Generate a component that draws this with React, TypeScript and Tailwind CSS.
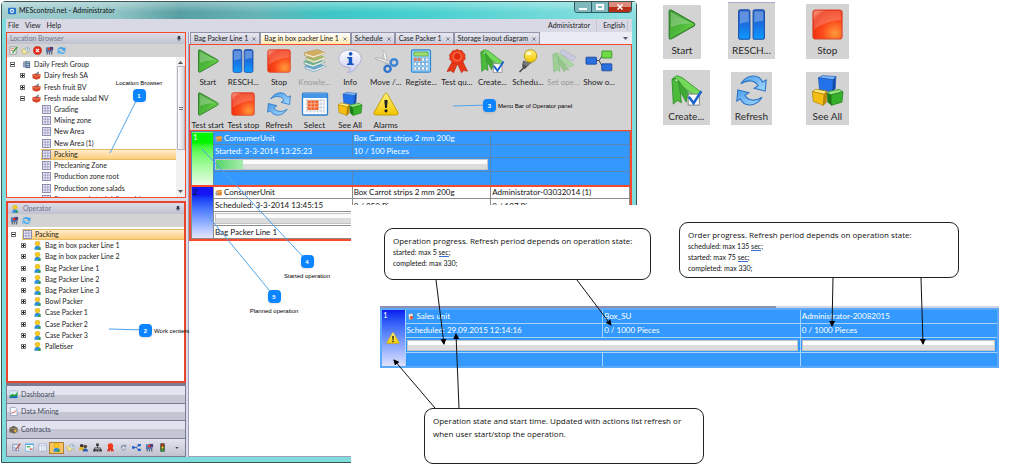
import type { ReactNode } from "react";
import { useState } from "react";

/* ---------- shared gradients ---------- */
function Gradients() {
  return (
    <svg width="0" height="0" className="absolute" aria-hidden="true">
      <defs>
        <linearGradient id="green" x1="0" y1="0" x2="1" y2="1">
          <stop offset="0" stopColor="#3f9e35" />
          <stop offset=".5" stopColor="#4cb83a" />
          <stop offset="1" stopColor="#7fe04a" />
        </linearGradient>
        <linearGradient id="blue" x1="0" y1="0" x2="0" y2="1">
          <stop offset="0" stopColor="#2a63c8" />
          <stop offset=".5" stopColor="#1a6fe0" />
          <stop offset="1" stopColor="#0d9bff" />
        </linearGradient>
        <radialGradient id="red" cx=".75" cy=".8" r=".95">
          <stop offset="0" stopColor="#ff9a3a" />
          <stop offset=".45" stopColor="#fb4a1c" />
          <stop offset=".85" stopColor="#ee2b0c" />
          <stop offset="1" stopColor="#f2694f" />
        </radialGradient>
        <linearGradient id="sky" x1="0" y1="0" x2="1" y2="1">
          <stop offset="0" stopColor="#4a9bea" />
          <stop offset="1" stopColor="#a5dbff" />
        </linearGradient>
        <linearGradient id="bubble" x1="0" y1="0" x2="0" y2="1">
          <stop offset="0" stopColor="#ffffff" />
          <stop offset="1" stopColor="#c9c9ee" />
        </linearGradient>
        <linearGradient id="yellow" x1="0" y1="0" x2="0" y2="1">
          <stop offset="0" stopColor="#fff27a" />
          <stop offset="1" stopColor="#f2c500" />
        </linearGradient>
        <marker id="tip" viewBox="0 0 6 6" refX="5" refY="3" markerWidth="6" markerHeight="6" markerUnits="userSpaceOnUse" orient="auto">
          <path d="M0 0 6 3 0 6z" fill="#000" />
        </marker>
      </defs>
    </svg>
  );
}

/* ---------- large icons, 24 x 24 grid ---------- */
const ICONS: Record<string, ReactNode> = {
  start: (
    <>
      <path d="M2.500 2Q2.500 .2 4.200 1L21.500 10.800Q23 12 21.500 13.200L4.200 23Q2.500 23.800 2.500 22z" fill="url(#green)" stroke="#2c7d28" strokeWidth=".9" />
      <path d="M3.800 2.300 20 11.500Q12 10.500 3.800 14z" fill="#fff" opacity=".25" />
    </>
  ),
  pause: (
    <>
      <rect x="2" y=".6" width="8.800" height="22.800" rx="1.600" fill="url(#blue)" stroke="#1c4fa8" strokeWidth=".8" />
      <rect x="13.200" y=".6" width="8.800" height="22.800" rx="1.600" fill="url(#blue)" stroke="#1c4fa8" strokeWidth=".8" />
      <path d="M3 2h6.800v8q-3.400 0-6.800 1.500zM14.200 2H21v7q-3.400 0-6.800 1.500z" fill="#fff" opacity=".28" />
    </>
  ),
  stop: (
    <>
      <rect x=".7" y=".7" width="22.600" height="22.600" rx="2" fill="url(#red)" stroke="#d9482c" strokeWidth=".8" />
      <path d="M1.600 2.600q0-1 1-1h18.800q1 0 1 1v6Q10 9.500 1.600 16z" fill="#fff" opacity=".2" />
    </>
  ),
  books: (
    <g strokeWidth=".5">
      <path d="M2 17l12-3 9 3.500L11 22.500 2 19.500z" fill="#4f9ccb" stroke="#3a7aa5" />
      <path d="M2.500 17.800 11 20.700 22 16.600v1.300L11 22.300 2.500 19.300z" fill="#e6eef2" />
      <path d="M1 12.500l12-3 9 3.500-12 5-9-3z" fill="#5aa888" stroke="#3f8a6c" />
      <path d="M1.500 13.300 10 16.200 21 12.100v1.300L10 17.800 1.500 14.800z" fill="#eaf2ea" />
      <path d="M3 8.500l12-3 8 3.500-12 5-8-3z" fill="#9ab556" stroke="#7c9540" />
      <path d="M3.500 9.300 11 12.200 22.500 8.100v1.300L11 13.800 3.500 10.800z" fill="#f1f1e0" />
      <path d="M1.500 3.500l13-3 8.500 3.500-12.500 5.500-9-3z" fill="#cfa545" stroke="#a98530" />
      <path d="M2 4.400 10.500 7.200 22.500 3v1.300L10.500 8.800 2 6z" fill="#f5efd8" />
    </g>
  ),
  info: (
    <>
      <path d="M12 1C5.500 1 .8 4.800.8 9.800c0 5 4.700 8.700 11 8.800.7 2.500-.6 4-2.300 4.800 5.500-.2 8.200-2.700 8.700-6.200 3-1.600 5-4.300 5-7.400C23.200 4.800 18.500 1 12 1z" fill="url(#bubble)" stroke="#a6a6cf" strokeWidth=".8" />
      <circle cx="12.600" cy="4.800" r="1.900" fill="#1557c0" />
      <path d="M9.200 8h5v6.400h1.600v1.500H9v-1.500h1.700V9.500H9.200z" fill="#1557c0" />
    </>
  ),
  scissors: (
    <>
      <path d="M8.500 1.200q3 1.500 3.600 5l1.500 8-2.200.8z" fill="#fafafa" stroke="#999" strokeWidth=".6" />
      <path d="M.8 9.500q2-1.500 5.500-.3l10 3.600-.8 2.200z" fill="#eee" stroke="#999" strokeWidth=".6" />
      <circle cx="20" cy="13.500" r="3.300" fill="none" stroke="#3f86d8" strokeWidth="2.400" />
      <circle cx="13.600" cy="19.800" r="3.100" fill="none" stroke="#2f74cc" strokeWidth="2.400" />
    </>
  ),
  calculator: (
    <>
      <rect x="2.500" y=".8" width="19" height="22.400" rx="1.500" fill="#9fd6fb" stroke="#3187cf" strokeWidth="1.200" />
      <rect x="5" y="3" width="14" height="4" fill="#9fdc6c" stroke="#4b9e44" strokeWidth=".7" />
      <g fill="#fff" stroke="#4d86bf" strokeWidth=".5">
        {[9, 13.5, 18].map((y) =>
          [5, 8.8, 12.6, 16.4].map((x) => <rect key={`${x}-${y}`} x={x} y={y} width="2.700" height="3" />),
        )}
      </g>
      <path d="M5 9h2.700v3H5zM8.800 9h2.700v3H8.800z" fill="#e77b55" />
    </>
  ),
  ribbon: (
    <>
      <path d="M7.500 12 2 22.500l4-.7 2.500 2 4-9 4 9 2.300-2.200 3.700.6L17 11z" fill="#e8381a" stroke="#b5240d" strokeWidth=".6" />
      <path d="M12.200.5l2.200 1 2.500.2 1.300 2 1.800 1.700-.3 2.400.5 2.300-1.800 1.600-1.100 2.200-2.500.4-2.200 1.100-2.300-1-2.400-.3-1.400-2-1.800-1.700.3-2.400-.4-2.400 1.700-1.600 1.200-2.100 2.400-.3z" fill="#f23c1c" stroke="#bb220b" strokeWidth=".7" />
      <circle cx="12.300" cy="7.500" r="4" fill="#e0290b" stroke="#ff8a66" strokeWidth=".9" />
    </>
  ),
  create: (
    <>
      <path d="M.8 3.200 4.500.5l4.300 1.700L23.500 13.500 20 17 7 8z" fill="#74d95a" stroke="#2f9a2b" strokeWidth=".7" />
      <path d="M.8 3.200 3.800 2.600 6.500 6.500 8 21.500 5 19.700 1.800 22.500z" fill="#4cbb3b" stroke="#2f8f2a" strokeWidth=".7" />
      <path d="M5.500 4 9 8.500l7 8.500-3.500.3-.7 3.700L7.200 13z" fill="#3fa832" stroke="#2f8f2a" strokeWidth=".6" />
      <circle cx="4.300" cy="4" r="1.100" fill="#e4f7df" stroke="#2f8f2a" strokeWidth=".6" />
      <rect x="13.300" y="14.800" width="8.700" height="8.500" fill="#fff" stroke="#8a8a8a" strokeWidth=".8" />
      <path d="M13.800 16.800l3.700 5 6-9.300" fill="none" stroke="#1d62cf" strokeWidth="2" />
    </>
  ),
  pin: (
    <>
      <path d="M7.500 11.500q4 1 5.500 4.500l-4.500 4.200q-3-2-2.200-5z" fill="#555" />
      <path d="M10.500 16 3.500 23" stroke="#444" strokeWidth="1.500" />
      <path d="M6 14q7-1 10.500-5l1.500 2q-3 5-8.500 6z" fill="#777" />
      <circle cx="14.500" cy="7" r="6.300" fill="url(#yellow)" stroke="#a79210" strokeWidth=".8" />
      <ellipse cx="12.800" cy="4.500" rx="2.800" ry="1.800" fill="#fffde0" opacity=".8" />
    </>
  ),
  tags: (
    <g opacity=".75">
      <path d="M8.500 2.200 11.500.7l12.500 7.500L20.500 12 10 6z" fill="#c5c5e6" stroke="#9696c0" strokeWidth=".6" />
      <path d="M.8 5.700 4 3.500l4.500 1.700L21.500 15.500 18 18.500 7 10.500z" fill="#94dc84" stroke="#5fb054" strokeWidth=".6" />
      <path d="M.8 5.700 3.800 5.100 6.500 9 8 22.500l-3-1.800L1.800 23.500z" fill="#7acb6b" stroke="#58a94e" strokeWidth=".6" />
      <path d="M5.500 6.500 17 21l-4-.5-.8 2.500L7.200 15z" fill="#6fbf60" stroke="#58a94e" strokeWidth=".6" />
    </g>
  ),
  flow: (
    <>
      <path d="M9 11.500h3L16 6M12 11.500 16 18.500" fill="none" stroke="#444" strokeWidth="1" />
      <rect x="-1" y="8.200" width="10.500" height="7" rx=".6" fill="#2a6fe0" stroke="#163f93" strokeWidth=".8" />
      <rect x="14.800" y="2" width="10" height="7" rx=".6" fill="#6edb46" stroke="#2e8c22" strokeWidth=".8" />
      <rect x="14.800" y="14.800" width="10" height="7" rx=".6" fill="#2a6fe0" stroke="#163f93" strokeWidth=".8" />
    </>
  ),
  refresh: (
    <g stroke="#2a72c4" strokeWidth=".8">
      <path d="M3.800 6.800C8.500-.8 17.500-1 20.700 5.400l2.700-1.600-.8 8.700-8.600-2.200 3.100-2C14.800 4 9 3.300 3.800 6.800z" fill="url(#sky)" />
      <path d="M20.200 17.200c-4.700 7.600-13.700 7.800-16.900 1.400L.6 20.200l.8-8.700L10 13.700l-3.100 2c2.300 4.300 8.100 5 13.300 1.500z" fill="url(#sky)" />
    </g>
  ),
  calendar: (
    <>
      <rect x="-.5" y="1.200" width="25" height="21.800" rx="1" fill="#fff" stroke="#2f7fd0" strokeWidth="1.300" />
      <rect x="0" y="1.800" width="24" height="4.200" fill="#4499e6" />
      <path d="M2.500 8.500h19M2.500 12h19M2.500 15.500h19M2.500 19h19M4 7v14M7.500 7v14M11 7v14M14.500 7v14M18 7v14M21 7v14" stroke="#b7c6d6" strokeWidth=".7" />
      <path d="M4.500 8.500h11v9.500h-11z" fill="#f0642f" />
      <path d="M8 8.500v9.500M11.700 8.500v9.500M4.500 11.700h11M4.500 14.900h11" stroke="#ffc3a5" strokeWidth=".7" />
    </>
  ),
  cubes: (
    <g strokeLinejoin="round" strokeWidth=".5">
      <path d="M5 2.200 8 .5l10.500.7L16.500 3.700z" fill="#7cb8ff" stroke="#1c55b0" />
      <path d="M5 2.200 16.500 3.700l-.7 9.500L5.800 11.500z" fill="#2273ea" stroke="#1c55b0" />
      <path d="M16.500 3.700 18.500 1.200l-.5 9-2.200 3z" fill="#0d49ab" stroke="#1c55b0" />
      <path d="M.2 12.800 3 11l8.500 1.500L9.500 15z" fill="#ffe873" stroke="#a87d00" />
      <path d="M.2 12.800 9.500 15l-.7 8.500L1 20.500z" fill="#f3bd12" stroke="#a87d00" />
      <path d="M9.500 15l2-2.500L11 21l-2.200 2.500z" fill="#c08a00" stroke="#a87d00" />
      <path d="M11.800 14.500 13.500 12.500 21 11.200l3 1.800-9.300 2.300z" fill="#8fe578" stroke="#1d7a17" />
      <path d="M11.800 14.200l3 1.300.4 8-3-2.500z" fill="#1a7d15" stroke="#1d7a17" />
      <path d="M14.800 15.500 24 13l-.8 8-8 2.500z" fill="#35b02a" stroke="#1d7a17" />
    </g>
  ),
  alarm: (
    <>
      <path d="M12 1.200q.9 0 1.500 1L24 20.500q.7 2.300-1.500 2.500h-21Q-.7 22.800 0 20.500L10.500 2.200q.6-1 1.500-1z" fill="url(#yellow)" stroke="#c29b00" strokeWidth=".9" />
      <path d="M10.300 8.500q1.700-1.600 3.400 0L12.900 16h-1.800z" fill="#222" />
      <circle cx="12" cy="18.800" r="1.600" fill="#222" />
    </>
  ),
};

function Icon({ name, className }: { name: string; className: string }) {
  return (
    <svg viewBox="0 0 24 24" className={`shrink-0 overflow-visible ${className}`} aria-hidden="true">
      {ICONS[name]}
    </svg>
  );
}

/* ---------- small icons, 10 x 10 grid ---------- */
const SMALL: Record<string, ReactNode> = {
  app: (
    <>
      <rect x="0" y="1" width="10" height="8" rx="1.500" fill="#2573c9" />
      <circle cx="5" cy="5" r="2.700" fill="#e6f2fb" />
      <circle cx="5" cy="5" r="1.200" fill="#2573c9" />
    </>
  ),
  edit: (
    <>
      <path d="M1 1h7v8H1z" fill="#f6f8f6" stroke="#777" strokeWidth=".7" />
      <path d="M2 3h4M2 5h3" stroke="#c9583f" strokeWidth=".8" />
      <path d="M4 7.500 9.300 1" stroke="#35a13a" strokeWidth="1.500" />
    </>
  ),
  note: (
    <>
      <path d="M.5 4.500 7 1.500l2 5L3 9.500z" fill="#f5e79a" stroke="#b9a04d" strokeWidth=".6" />
      <circle cx="7" cy="3.500" r="2.500" fill="#d8eaf7" stroke="#8babc7" strokeWidth=".7" />
      <path d="M7 2v1.700h1.200" fill="none" stroke="#456" strokeWidth=".6" />
    </>
  ),
  close: (
    <>
      <circle cx="5" cy="5" r="4.500" fill="#e62a17" stroke="#a81408" strokeWidth=".5" />
      <path d="M3.200 3.200l3.600 3.600M6.800 3.200 3.200 6.800" stroke="#fff" strokeWidth="1.300" />
    </>
  ),
  find: (
    <>
      <path d="M1 1.500h6V7H1z" fill="#4a7fc0" />
      <path d="M5 1h4v4H5z" fill="#4b3f7c" />
      <circle cx="4.500" cy="3.500" r="1.500" fill="#e23a25" />
      <path d="M2.500 6v3.500M5 7v2.500M7.500 5.500v4" stroke="#555f72" strokeWidth="1.300" />
    </>
  ),
  refresh: (
    <>
      <path d="M.5 5C.5 1.200 5.500 0 8 2.400L9.500 1V5.200H5.300l1.200-1.400C4.800 2.500 2.500 3 .5 5z" fill="#3ea0ea" />
      <path d="M9.500 5.200C9.500 9 4.500 10.200 2 7.800L.5 9.200V5h4.200L3.500 6.400c1.700 1.300 4 .8 6-1.200z" fill="#59b2f2" />
    </>
  ),
  site: (
    <>
      <path d="M1 2 6 .5V9L1 8z" fill="#8ea3bb" />
      <path d="M4 1.500h5V9H4z" fill="#4f6b8e" />
      <path d="M5 3h3M5 5h3M5 7h3" stroke="#d9e4f0" strokeWidth=".8" />
    </>
  ),
  factory: (
    <>
      <path d="M.3 4 5 2.500 9.700 4 9 8 5 9.700.7 8z" fill="#d8452a" />
      <path d="M.5 4.300 5 6l4.500-1.700" fill="none" stroke="#f3a088" strokeWidth=".7" />
      <path d="M4 3.500 6.500.5l1.500.5L6.800 4z" fill="#7a8896" />
    </>
  ),
  grid: (
    <>
      <rect x=".5" y=".5" width="9" height="9" fill="#eeeefc" stroke="#77779f" strokeWidth=".9" />
      <path d="M3.500 1v8M6.500 1v8M1 3.500h8M1 6.500h8" stroke="#9191bb" strokeWidth=".8" />
    </>
  ),
  person: (
    <>
      <path d="M1.500 9.800q0-4.300 3.500-4.800 3.500.5 3.500 4.800z" fill="#2c8fdb" />
      <path d="M4.500 9.800 8.300 6.300v3.500z" fill="#37a32f" />
      <circle cx="5" cy="2.900" r="2.700" fill="#f7cb1d" stroke="#c99708" strokeWidth=".5" />
    </>
  ),
  chart: (
    <>
      <rect x=".5" y=".8" width="9" height="8.500" rx="1" fill="#d7ecf9" stroke="#7fa7c4" strokeWidth=".5" />
      <path d="M.7 7Q3 3.500 5 5t4.300-3v4.500l-8.600 2z" fill="#1fa22a" />
      <path d="M.7 9V7.500q4-.5 8.600-1V9z" fill="#2269c4" />
    </>
  ),
  page: (
    <>
      <path d="M1.500.5H7L9 2.500v7H1.500z" fill="#f5f7fc" stroke="#7a8db0" strokeWidth=".7" />
      <path d="M2.500 8 4.500 5.500l1 1L8 3.500" fill="none" stroke="#d64f3d" strokeWidth=".9" />
    </>
  ),
  box: (
    <>
      <path d="M.5 3 5 .8 9.500 3v4.500L6 9.500.5 8z" fill="#6c6455" />
      <path d="M.5 3 6 4.300 9.500 3" fill="none" stroke="#b5a98e" strokeWidth=".7" />
      <circle cx="7" cy="6.500" r="1.500" fill="#e0b13b" />
    </>
  ),
  pen: (
    <>
      <path d="M.8 1.500h6.500v7H.8z" fill="#dfe7f6" stroke="#6f83ad" strokeWidth=".8" />
      <path d="M2 4.500l2 2.700" fill="none" stroke="#4e6ea6" strokeWidth=".9" />
      <path d="M4 7.500 9.300.8" fill="none" stroke="#c4472f" strokeWidth="1.300" />
    </>
  ),
  plan: (
    <>
      <rect x=".5" y="1" width="9" height="8" fill="#f5fbff" stroke="#6fb3e6" strokeWidth=".8" />
      <path d="M.5 1.500h9" stroke="#4a9fe0" strokeWidth="1.200" />
      <path d="M2 4.200h4" stroke="#2fae3a" strokeWidth="1.300" />
      <path d="M5 6.800h3.500" stroke="#e2442c" strokeWidth="1.300" />
    </>
  ),
  list: (
    <>
      <rect x="1" y="1" width="8" height="8" fill="#f4f6fb" stroke="#8fa5c8" strokeWidth=".7" />
      <path d="M1 3h8M4 3v6M6.500 3v6" stroke="#a9bcd8" strokeWidth=".7" />
    </>
  ),
  people: (
    <>
      <circle cx="3" cy="3" r="2" fill="#3b3226" />
      <path d="M0 8q0-3.500 3-3.500T6 8z" fill="#e2b422" />
      <circle cx="7" cy="4" r="2" fill="#5a4634" />
      <path d="M4 9.500q0-3.500 3-3.500t3 3.500z" fill="#2b5fb3" />
    </>
  ),
  tree: (
    <>
      <path d="M5 3v2.500M1.800 8V5.500h6.400V8" fill="none" stroke="#222" strokeWidth=".8" />
      <path d="M3.600.5h2.800v2.800H3.600zM.3 7h2.800v2.500H.3zM3.700 7h2.600v2.500H3.700zM7 7h2.700v2.500H7z" fill="#2d2d2d" />
    </>
  ),
  award: (
    <>
      <path d="M3 5 1 9.500l2-.5 1 .8L5 7l1 2.800L7 9l2 .5L7 5z" fill="#d92a10" />
      <circle cx="5" cy="3.300" r="3" fill="#f03a1c" />
    </>
  ),
  swirl: (
    <>
      <path d="M2 6C1.500 3 4 1 7 2.500L8 1.500v3H5L6 3.500C4 3 3 4 3.500 5.500z" fill="#8793ab" />
      <path d="M8 5C8.500 8 6 9.500 4 8.500L3 9.500v-3h3l-1 1C6.500 7.500 7.200 6.800 6.800 5z" fill="#a6b1c4" />
    </>
  ),
  nodes: (
    <>
      <path d="M2 5h3l2-2.500M5 5l2 2.500" fill="none" stroke="#1d4fa5" strokeWidth=".9" />
      <path d="M0 3.700h3v2.600H0zM6.500 1h3.300v2.700H6.500zM6.500 6.300h3.300V9H6.500z" fill="#1d60d0" />
    </>
  ),
  traffic: (
    <>
      <rect x="2.500" y=".2" width="5" height="9.600" rx="1" fill="#3a4a2c" />
      <circle cx="5" cy="2" r="1.300" fill="#e8341d" />
      <circle cx="5" cy="5" r="1.300" fill="#f0bc25" />
      <circle cx="5" cy="8" r="1.300" fill="#38b838" />
    </>
  ),
  parcel: (
    <>
      <path d="M1 2.500 8.500 1l1.500 2-.5 6L2.500 9.300z" fill="#e08a2c" />
      <path d="M1 2.700l1.500 2.300 7.300-1.700" fill="none" stroke="#fbd9a8" strokeWidth=".9" />
      <path d="M.3 5.500 3.300 5v4.300L1 9z" fill="#8fa5bd" />
    </>
  ),
  sale: (
    <>
      <path d="M2 1.500 8.500.8 8 9 3 9.500z" fill="#f1f1f1" stroke="#777" strokeWidth=".6" />
      <path d="M5 4 9 5.500 7 9.500 4 7.500z" fill="#d9542f" />
    </>
  ),
};

function Small({ name, className = "size-2.5" }: { name: string; className?: string }) {
  return (
    <svg viewBox="0 0 10 10" className={`shrink-0 ${className}`} aria-hidden="true">
      {SMALL[name]}
    </svg>
  );
}

/* ---------- sidebar ---------- */
type Node = { label: string; icon: string; level: number; box?: "+" | "-"; selected?: boolean };

const LOCATIONS: Node[] = [
  { label: "Daily Fresh Group", icon: "site", level: 0, box: "-" },
  { label: "Dairy fresh SA", icon: "factory", level: 1, box: "+" },
  { label: "Fresh fruit BV", icon: "factory", level: 1, box: "+" },
  { label: "Fresh made salad NV", icon: "factory", level: 1, box: "-" },
  { label: "Grading", icon: "grid", level: 2 },
  { label: "Mixing zone", icon: "grid", level: 2 },
  { label: "New Area", icon: "grid", level: 2 },
  { label: "New Area (1)", icon: "grid", level: 2 },
  { label: "Packing", icon: "grid", level: 2, selected: true },
  { label: "Precleaning Zone", icon: "grid", level: 2 },
  { label: "Production zone root", icon: "grid", level: 2 },
  { label: "Production zone salads", icon: "grid", level: 2 },
  { label: "Storage and stock (all goods)", icon: "grid", level: 2 },
];

const CENTERS: Node[] = [
  { label: "Packing", icon: "grid", level: 0, box: "-", selected: true },
  ...[
    "Bag in box packer Line 1",
    "Bag in box packer Line 2",
    "Bag Packer Line 1",
    "Bag Packer Line 2",
    "Bag Packer Line 3",
    "Bowl Packer",
    "Case Packer 1",
    "Case Packer 2",
    "Case Packer 3",
    "Palletiser",
  ].map((label): Node => ({ label, icon: "person", level: 1, box: "+" })),
];

const INDENT = ["pl-[3px]", "pl-[13px]", "pl-[23px]"];

function TreeRow({ node }: { node: Node }) {
  return (
    <li className={`flex min-h-0 items-center ${INDENT[node.level]}`}>
      <span className="flex w-[11px] shrink-0">
        {node.box && (
          <span className="flex size-[5px] items-center justify-center border border-[#777] bg-white">
            <svg viewBox="0 0 3 3" className="size-[3px]" aria-hidden="true">
              <path d={node.box === "+" ? "M0 1h3v1H0zM1 0h1v3H1z" : "M0 1h3v1H0z"} fill="#222" />
            </svg>
          </span>
        )}
      </span>
      <span
        className={`flex h-full min-w-0 flex-1 items-center gap-[3px] whitespace-nowrap pl-px ${
          node.selected ? "border-y border-[#e6bc69] bg-linear-to-b from-[#ffeccb] to-[#fbce78]" : ""
        }`}
      >
        <Small name={node.icon} className="size-[9px]" />
        {node.label}
      </span>
    </li>
  );
}

function PanelHead({ title, icon, tools }: { title: string; icon?: string; tools: string[] }) {
  return (
    <>
      <div className="flex h-[11px] items-center gap-1 bg-linear-to-b from-[#dcdde8] to-[#c0c2cf] pl-[3px] pr-1 text-[#70758a]">
        {icon && <Small name={icon} className="size-[8px]" />}
        <h2 className="flex-1">{title}</h2>
        <svg viewBox="0 0 5 6" className="h-[5px] w-[4px]" aria-hidden="true">
          <path d="M1 0h3v3h1v1H3v2H2V4H0V3h1z" fill="#333a50" />
        </svg>
      </div>
      <div className="flex h-[13px] items-center gap-[3px] bg-[#d3d3d3] pl-[2px]">
        {tools.map((t) => (
          <button key={t} type="button" aria-label={t} className="flex">
            <Small name={t} className="size-[9px]" />
          </button>
        ))}
      </div>
    </>
  );
}

const STRIP = ["pen", "plan", "list", "person", "note", "people", "tree", "award", "swirl", "nodes", "find", "traffic"];

function Sidebar() {
  return (
    <aside className="w-[180px] shrink-0 text-[7px] leading-[9px] text-[#1e1e1e]">
      <section className="border border-[#f8492c]">
        <PanelHead title="Location Browser" tools={["edit", "note", "close", "find", "refresh"]} />
        <div className="flex h-[140px] overflow-hidden bg-white">
          <ul className="grid h-[148px] min-w-0 flex-1 auto-rows-fr pt-[2px]">
            {LOCATIONS.map((n) => (
              <TreeRow key={n.label} node={n} />
            ))}
          </ul>
          <div className="flex w-[9px] flex-col items-center gap-[2px] bg-[#f0f0f0] py-1">
            <svg viewBox="0 0 5 3" className="h-[3px] w-[5px]" aria-hidden="true">
              <path d="M0 3 2.500 0 5 3z" fill="#555" />
            </svg>
            <div className="flex h-[84px] w-[8px] flex-col items-center justify-center gap-px border border-[#b5b5bb] bg-linear-to-r from-white to-[#d5d5da]">
              <span className="h-px w-1 bg-[#777]" />
              <span className="h-px w-1 bg-[#777]" />
            </div>
            <svg viewBox="0 0 5 3" className="mt-auto h-[3px] w-[5px]" aria-hidden="true">
              <path d="M0 0 2.500 3 5 0z" fill="#555" />
            </svg>
          </div>
        </div>
      </section>

      <section className="mt-[3px] border-2 border-[#e8462c]">
        <PanelHead title="Operator" icon="person" tools={["find", "refresh"]} />
        <ul className="grid h-[154px] grid-rows-[repeat(11,minmax(0,1fr))] bg-white pb-[29px] pt-[2px]">
          {CENTERS.map((n) => (
            <TreeRow key={n.label} node={n} />
          ))}
        </ul>
      </section>

      <div className="border-x border-b border-[#7a7d92] bg-[#7a7d92] pt-[3px]">
        <div className="grid h-[53px] auto-rows-fr">
          {[
            ["chart", "Dashboard"],
            ["page", "Data Mining"],
            ["box", "Contracts"],
          ].map(([icon, label]) => (
            <button
              key={label}
              type="button"
              className="flex items-center gap-[3px] border-b border-[#7a7d92] bg-linear-to-b from-[#e2e3ee] from-50% to-[#c4c6d3] to-50% pl-[2px] text-[#474c5e]"
            >
              <Small name={icon} className="size-[9px]" />
              {label}
            </button>
          ))}
        </div>
        <div className="flex h-[17px] items-center bg-linear-to-b from-[#e2e3ee] to-[#c0c2cf] pl-[3px]">
          {STRIP.map((s) => (
            <button
              key={s}
              type="button"
              aria-label={s}
              className={`flex h-3 min-w-0 flex-1 items-center justify-center ${
                s === "person" ? "border border-[#a98038] bg-[#fbc25d]" : ""
              }`}
            >
              <Small name={s} className="size-[9px]" />
            </button>
          ))}
          <button type="button" aria-label="Configure" className="flex w-4 justify-center">
            <svg viewBox="0 0 5 3" className="h-[2px] w-1" aria-hidden="true">
              <path d="M0 0h5L2.500 3z" fill="#444" />
            </svg>
          </button>
        </div>
      </div>
    </aside>
  );
}

/* ---------- operator panel ---------- */
const TABS = ["Bag Packer Line 1", "Bag in box packer Line 1", "Schedule", "Case Packer 1", "Storage layout diagram"];

const TOOLS: { icon: string; label: string; off?: boolean }[] = [
  { icon: "start", label: "Start" },
  { icon: "pause", label: "RESCH..." },
  { icon: "stop", label: "Stop" },
  { icon: "books", label: "Knowle...", off: true },
  { icon: "info", label: "Info" },
  { icon: "scissors", label: "Move /..." },
  { icon: "calculator", label: "Registe..." },
  { icon: "ribbon", label: "Test qu..." },
  { icon: "create", label: "Create..." },
  { icon: "pin", label: "Schedu..." },
  { icon: "tags", label: "Set ope...", off: true },
  { icon: "flow", label: "Show o..." },
  { icon: "start", label: "Test start" },
  { icon: "stop", label: "Test stop" },
  { icon: "refresh", label: "Refresh" },
  { icon: "calendar", label: "Select" },
  { icon: "cubes", label: "See All" },
  { icon: "alarm", label: "Alarms" },
];

function Progress({ value, max }: { value: number; max: number }) {
  return (
    <div
      role="progressbar"
      aria-label="Progress"
      aria-valuenow={value}
      aria-valuemax={max}
      className="h-[11px] border border-[#c4c4c4] bg-linear-to-b from-[#fbfbfb] from-50% to-[#dcdcdc] to-50%"
    >
      <div
        className="h-full bg-linear-to-r from-[#52d566] to-[#a5ecac]"
        style={{ width: `${(value / max) * 300}%`, maxWidth: value ? "30%" : 0 }}
      />
    </div>
  );
}

function OperationTable() {
  return (
    <table className="w-full table-fixed border-collapse text-[8px] leading-[10px] [&_td]:whitespace-nowrap [&_td]:p-0 [&_td]:pl-px">
      <colgroup>
        <col className="w-[22px]" />
        <col />
        <col />
        <col />
      </colgroup>
      <tbody className="bg-[#3399ff] text-white [&_td]:border [&_td]:border-[#5a86b5]">
        <tr className="h-[13px]">
          <td rowSpan={4} className="bg-linear-to-b from-[#00f500] from-20% to-[#e9fbe9] align-top">1</td>
          <td>
            <span className="flex items-center gap-[2px]">
              <Small name="parcel" className="size-[7px]" />
              ConsumerUnit
            </span>
          </td>
          <td>Box Carrot strips 2 mm 200g</td>
          <td />
        </tr>
        <tr className="h-[13px]">
          <td>Started: 3-3-2014 13:25:23</td>
          <td>10 / 100 Pieces</td>
          <td />
        </tr>
        <tr className="h-[14px]">
          <td colSpan={2} className="pr-[2px]!">
            <Progress value={10} max={300} />
          </td>
          <td />
        </tr>
        <tr className="h-[14px]">
          <td />
          <td />
          <td />
        </tr>
      </tbody>
      <tbody className="border-t-2 border-[#f8492c] bg-white text-[#111] [&_td]:border-x [&_td]:border-b [&_td]:border-[#8c8c8c]">
        <tr className="h-[13px]">
          <td rowSpan={4} className="bg-linear-to-b from-[#1414f5] from-15% to-[#e6e6fd] align-top">2</td>
          <td>
            <span className="flex items-center gap-[2px]">
              <Small name="parcel" className="size-[7px]" />
              ConsumerUnit
            </span>
          </td>
          <td>Box Carrot strips 2 mm 200g</td>
          <td>Administrator-03032014 (1)</td>
        </tr>
        <tr className="h-[13px]">
          <td>Scheduled: 3-3-2014 13:45:15</td>
          <td className="align-bottom">0 / 250 Pieces</td>
          <td className="align-bottom">0 / 197 Pieces</td>
        </tr>
        <tr className="h-[14px]">
          <td colSpan={2} className="pr-[2px]!">
            <Progress value={0} max={250} />
          </td>
          <td />
        </tr>
        <tr className="h-[13px]">
          <td>Bag Packer Line 1</td>
          <td />
          <td />
        </tr>
      </tbody>
    </table>
  );
}

function OperatorPanel() {
  const [tab, setTab] = useState(1);
  return (
    <main className="flex min-w-0 flex-1 flex-col border-b border-l border-[#9fa0c0] bg-white">
      <div className="flex h-[12px] items-stretch bg-[#eaebf3] pl-px text-[7px] leading-[9px] text-[#222]">
        {TABS.map((t, i) => (
          <button
            key={t}
            type="button"
            onClick={() => setTab(i)}
            className={`flex items-center gap-1 whitespace-nowrap border border-b-0 border-[#9193a8] px-[3px] ${
              i === tab ? "bg-linear-to-b from-white to-[#ffe9ad]" : "bg-linear-to-b from-[#e6e7f0] to-[#c9cbd9]"
            }`}
          >
            {t}
            <svg viewBox="0 0 5 5" className="size-[4px]" aria-hidden="true">
              <path d="M.5.5l4 4M4.500.5l-4 4" stroke="#555a70" strokeWidth=".9" />
            </svg>
          </button>
        ))}
        <svg viewBox="0 0 5 3" className="mr-1 ml-auto h-[3px] w-[5px] self-center" aria-hidden="true">
          <path d="M0 0h5L2.500 3z" fill="#555a70" />
        </svg>
      </div>
      <div className="grid grid-cols-12 gap-y-[5px] border border-b-0 border-[#f8492c] bg-[#d3d3d3] pr-[14px] pt-1 text-[8px] leading-[10px] text-[#222]">
        {TOOLS.map((t) => (
          <button
            key={t.label}
            type="button"
            disabled={t.off}
            className={`flex h-[38px] min-w-0 flex-col items-center gap-1 whitespace-nowrap ${t.off ? "text-[#999]" : ""}`}
          >
            <Icon name={t.icon} className={t.off ? "size-6 opacity-80" : "size-6"} />
            {t.label}
          </button>
        ))}
      </div>
      <div className="border-x-2 border-b-2 border-t border-[#f8492c]">
        <OperationTable />
      </div>
    </main>
  );
}

/* ---------- application window ---------- */
function AppWindow() {
  return (
    <div className="mt-px ml-px w-[62.1%] shrink-0 self-start rounded-t-sm border border-[#3c5557] bg-[#7fdcdc] px-1 pb-[5px]">
      <header className="-mx-1 flex h-[17px] items-center gap-[3px] bg-[linear-gradient(to_bottom,rgba(255,255,255,.35),rgba(255,255,255,0)_60%),linear-gradient(to_right,#a3cfd1_0%,#8fc3c5_18%,#579fa2_28%,#66b4b6_40%,#3fc6c6_52%,#48cfcf_66%,#8fe0e0_100%)] pl-[6px] text-[7px] text-[#111]">
        <Small name="app" className="size-[8px]" />
        <h1 className="flex-1">MEScontrol.net - Administrator</h1>
        <div className="mr-1 flex h-[11px] self-start overflow-hidden rounded-b-sm border border-t-0 border-[#2c5b60]">
          <button type="button" aria-label="Minimize" className="flex w-[17px] items-center justify-center border-r border-[#2c5b60] bg-[#7fb9bd]">
            <span className="mt-1 h-[2px] w-2 bg-white" />
          </button>
          <button type="button" aria-label="Maximize" className="flex w-[17px] items-center justify-center border-r border-[#2c5b60] bg-[#7fb9bd]">
            <span className="h-[6px] w-2 border-2 border-white" />
          </button>
          <button type="button" aria-label="Close" className="flex w-[22px] items-center justify-center bg-linear-to-b from-[#dc8b7c] from-50% to-[#b52f16] to-50%">
            <svg viewBox="0 0 6 6" className="size-[6px]" aria-hidden="true">
              <path d="M.5.5l5 5M5.500.5l-5 5" stroke="#fff" strokeWidth="1.500" />
            </svg>
          </button>
        </div>
      </header>
      <nav className="flex h-[13px] items-center gap-[6px] bg-[#d9d9e6] pl-[2px] pr-1 text-[7px] text-[#222]">
        <button type="button">File</button>
        <button type="button">View</button>
        <button type="button">Help</button>
        <span className="ml-auto border-r border-[#c3c4d2] pr-[6px]">Administrator</span>
        <span className="border-r border-[#c3c4d2] pr-[2px]">English</span>
      </nav>
      <div className="flex gap-[2px] bg-[#dcdce8]">
        <Sidebar />
        <OperatorPanel />
      </div>
    </div>
  );
}

/* ---------- button samples ---------- */
function Sample({ icon, label, className }: { icon: string; label: string; className: string }) {
  return (
    <button
      type="button"
      className={`flex flex-col items-center justify-end gap-1 bg-[#d3d3d3] pb-[3px] text-[10px] leading-3 text-[#2a2a2a] ${className}`}
    >
      <Icon name={icon} className="size-[31px]" />
      {label}
    </button>
  );
}

function Samples() {
  return (
    <section className="grid grid-cols-[65px_78px_auto] content-start items-end justify-start gap-y-[11px] pl-[26px] pt-[2px]">
      <Sample icon="start" label="Start" className="h-[54px] w-[38px]" />
      <Sample icon="pause" label="RESCH..." className="h-[57px] w-[47px] border-t border-[#a9aecb]" />
      <Sample icon="stop" label="Stop" className="h-[55px] w-[43px]" />
      <Sample icon="create" label="Create..." className="h-[55px] w-[47px]" />
      <Sample icon="refresh" label="Refresh" className="ml-[3px] h-[53px] w-[41px]" />
      <Sample icon="cubes" label="See All" className="h-[53px] w-[43px]" />
    </section>
  );
}

/* ---------- progress diagram ---------- */
function Sec() {
  return <span className="border-b border-[#3b6fd4]">sec</span>;
}

function Callout({ className, children }: { className: string; children: ReactNode }) {
  return (
    <div
      className={`absolute whitespace-nowrap rounded-[9px] border border-[#222] bg-white px-2 pt-[5px] font-['Open_Sans',sans-serif] text-[8px] leading-[13px] text-[#111] ${className}`}
    >
      {children}
    </div>
  );
}

function Detail({ children }: { children: ReactNode }) {
  return <p className="font-[Lato,sans-serif] text-[7px] leading-[11px]">{children}</p>;
}

function ProgressDiagram() {
  return (
    <section className="absolute top-[205px] right-0 bottom-0 left-[351px] bg-white">
      <Callout className="top-[23px] left-[33px] h-[52px] w-[267px]">
        <p>Operation progress. Refresh period depends on operation state:</p>
        <Detail>started: max 5 <Sec />;</Detail>
        <Detail>completed: max 330;</Detail>
      </Callout>
      <Callout className="top-[17px] left-[328px] h-[56px] w-[280px]">
        <p>Order progress. Refresh period depends on operation state:</p>
        <Detail>scheduled: max 135 <Sec />;</Detail>
        <Detail>started: max 75 <Sec />;</Detail>
        <Detail>completed: max 330;</Detail>
      </Callout>
      <Callout className="top-[203px] left-[73px] h-[56px] w-[280px]">
        <p>Operation state and start time. Updated with actions list refresh or</p>
        <p>when user start/stop the operation.</p>
      </Callout>

      <div className="mt-[101px] mr-[25px] ml-[29px]">
        <div className="flex h-[2px]">
          <span className="w-[64%] bg-[#8f8fb0]" />
          <span className="flex-1 bg-[#d3d3e3]" />
        </div>
        <table className="w-full table-fixed border-collapse border-2 border-[#5aa9fb] bg-[#3399ff] text-[8px] leading-[10px] text-white [&_td]:border [&_td]:border-[#a9d2fb] [&_td]:p-0 [&_td]:pl-px">
          <colgroup>
            <col className="w-[24px]" />
            <col />
            <col />
            <col />
          </colgroup>
          <tbody>
            <tr className="h-[14px]">
              <td rowSpan={4} className="bg-linear-to-b from-[#1212f0] to-[#e0e0fb] align-top">
                <div className="flex h-[56px] flex-col">
                  <span>1</span>
                  <Icon name="alarm" className="mt-[12px] ml-[4px] size-[12px]" />
                </div>
              </td>
              <td>
                <span className="flex items-center gap-[3px]">
                  <Small name="sale" className="size-[7px]" />
                  Sales unit
                </span>
              </td>
              <td>Box_SU</td>
              <td>Administrator-20082015</td>
            </tr>
            <tr className="h-[14px]">
              <td>Scheduled: 29.09.2015 12:14:16</td>
              <td>0 / 1000 Pieces</td>
              <td>0 / 1000 Pieces</td>
            </tr>
            <tr className="h-[15px]">
              <td colSpan={2} className="pr-[2px]!">
                <Progress value={0} max={1000} />
              </td>
              <td className="pr-[2px]!">
                <Progress value={0} max={1000} />
              </td>
            </tr>
            <tr className="h-[14px]">
              <td />
              <td />
              <td />
            </tr>
          </tbody>
        </table>
      </div>
    </section>
  );
}

/* ---------- annotations ---------- */
function Badge({ n, label, className, below }: { n: number; label: string; className: string; below?: boolean }) {
  return (
    <div
      className={`absolute flex items-center whitespace-nowrap font-['Liberation_Sans',sans-serif] text-[6px] leading-[8px] text-black ${
        below ? "w-20 flex-col gap-1" : "gap-[2px]"
      } ${className}`}
    >
      <span className="flex size-[13px] items-center justify-center rounded-[4px] bg-[#0a84ff] font-bold text-white shadow-sm">{n}</span>
      {label}
    </div>
  );
}

function Annotations() {
  return (
    <div className="pointer-events-none absolute inset-0 overflow-hidden">
      <svg width="1024" height="476" className="absolute top-0 left-0 max-w-none" aria-hidden="true">
        <path
          d="M139 95 110 153M145 330 109 329M489 105 453 106M202 149 307 261M205 212 274 296"
          fill="none"
          stroke="#4fa3ea"
          strokeWidth="1"
        />
        <g stroke="#111" strokeWidth="1" fill="none">
          <path d="M436 280 444 344" markerEnd="url(#tip)" />
          <path d="M577 280 611 325" markerEnd="url(#tip)" />
          <path d="M833 278 832 326" markerEnd="url(#tip)" />
          <path d="M921 278 923 344" markerEnd="url(#tip)" />
          <path d="M435 408 394 360" markerEnd="url(#tip)" />
          <path d="M459 408 456 334" markerEnd="url(#tip)" />
        </g>
      </svg>
      <div className="absolute top-[79px] left-[99px] flex w-20 flex-col items-center gap-[2px] font-['Liberation_Sans',sans-serif] text-[6px] leading-[8px] text-black">
        Location Browser
        <span className="flex size-[13px] items-center justify-center rounded-[4px] bg-[#0a84ff] font-bold text-white shadow-sm">1</span>
      </div>
      <Badge n={2} label="Work centers" className="top-[324px] left-[139px]" />
      <Badge n={3} label="Menu Bar of Operator panel" className="top-[99px] left-[483px]" />
      <Badge n={4} label="Started operation" className="top-[255px] left-[267px]" below />
      <Badge n={5} label="Planned operation" className="top-[290px] left-[234px]" below />
    </div>
  );
}

export default function App() {
  return (
    <div className="relative flex min-h-screen bg-white font-[Lato,'Open_Sans',sans-serif]">
      <Gradients />
      <AppWindow />
      <Samples />
      <ProgressDiagram />
      <Annotations />
    </div>
  );
}
